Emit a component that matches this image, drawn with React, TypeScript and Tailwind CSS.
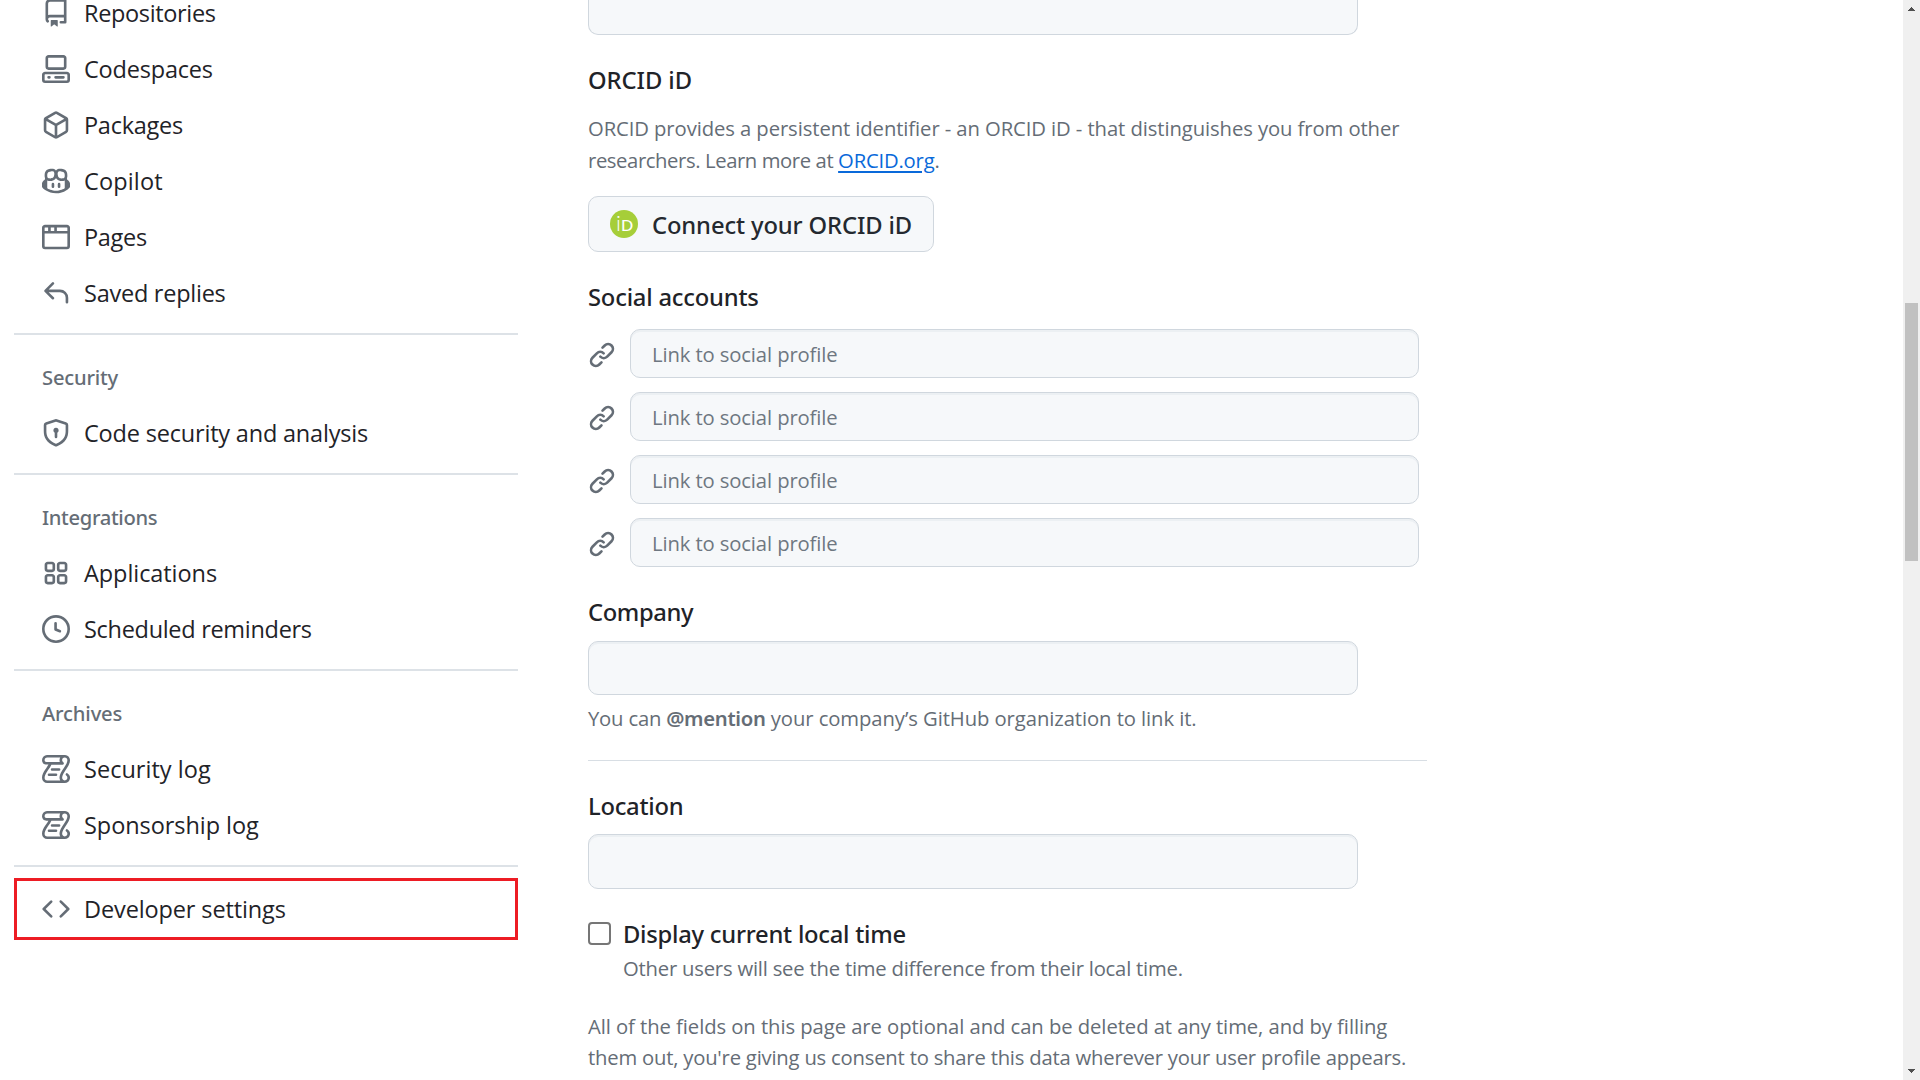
import type { ReactNode } from "react";

const paths = {
  repo: [
    "M2 2.5A2.5 2.5 0 0 1 4.5 0h8.75a.75.75 0 0 1 .75.75v12.5a.75.75 0 0 1-.75.75h-2.5a.75.75 0 0 1 0-1.5h1.75v-2h-8a1 1 0 0 0-.714 1.7.75.75 0 1 1-1.072 1.05A2.495 2.495 0 0 1 2 11.5Zm10.5-1h-8a1 1 0 0 0-1 1v6.708A2.486 2.486 0 0 1 4.5 9h8ZM5 12.25a.25.25 0 0 1 .25-.25h3.5a.25.25 0 0 1 .25.25v3.25a.25.25 0 0 1-.4.2l-1.45-1.087a.249.249 0 0 0-.3 0L5.4 15.7a.25.25 0 0 1-.4-.2Z",
  ],
  codespaces: [
    "M0 11.25c0-.966.784-1.75 1.75-1.75h12.5c.966 0 1.75.784 1.75 1.75v3A1.75 1.75 0 0 1 14.25 16H1.75A1.75 1.75 0 0 1 0 14.25Zm2-9.5C2 .784 2.784 0 3.75 0h8.5C13.216 0 14 .784 14 1.75v5a1.75 1.75 0 0 1-1.75 1.75h-8.5A1.75 1.75 0 0 1 2 6.75Zm1.75-.25a.25.25 0 0 0-.25.25v5c0 .138.112.25.25.25h8.5a.25.25 0 0 0 .25-.25v-5a.25.25 0 0 0-.25-.25Zm-2 9.5a.25.25 0 0 0-.25.25v3c0 .138.112.25.25.25h12.5a.25.25 0 0 0 .25-.25v-3a.25.25 0 0 0-.25-.25Z",
    "M7 12.75a.75.75 0 0 1 .75-.75h4.5a.75.75 0 0 1 0 1.5h-4.5a.75.75 0 0 1-.75-.75Zm-4 0a.75.75 0 0 1 .75-.75h.5a.75.75 0 0 1 0 1.5h-.5a.75.75 0 0 1-.75-.75Z",
  ],
  package: [
    "m8.878.392 5.25 3.045c.54.314.872.89.872 1.514v6.098a1.75 1.75 0 0 1-.872 1.514l-5.25 3.045a1.75 1.75 0 0 1-1.756 0l-5.25-3.045A1.75 1.75 0 0 1 1 11.049V4.951c0-.624.332-1.201.872-1.514L7.122.392a1.75 1.75 0 0 1 1.756 0ZM7.875 1.69l-4.63 2.685L8 7.133l4.755-2.758-4.63-2.685a.248.248 0 0 0-.25 0ZM2.5 5.677v5.372c0 .09.047.171.125.216l4.625 2.683V8.432Zm6.25 8.271 4.625-2.683a.25.25 0 0 0 .125-.216V5.677L8.75 8.432Z",
  ],
  copilot: [
    "M7.998 15.035c-4.562 0-7.873-2.914-7.998-3.749V9.338c.085-.628.677-1.686 1.588-2.065.013-.07.024-.143.036-.218.029-.183.06-.384.126-.612-.201-.508-.254-1.084-.254-1.656 0-.87.128-1.769.693-2.484.579-.733 1.494-1.124 2.724-1.261 1.206-.134 2.262.034 2.944.765.05.053.096.108.139.165.044-.057.094-.112.143-.165.682-.731 1.738-.899 2.944-.765 1.23.137 2.145.528 2.724 1.261.566.715.693 1.614.693 2.484 0 .572-.053 1.148-.254 1.656.066.228.098.429.126.612.012.076.024.148.037.218.924.385 1.522 1.471 1.591 2.095v1.872c0 .766-3.351 3.795-8.002 3.795Zm0-1.485c2.28 0 4.584-1.11 5.002-1.433V7.862l-.023-.116c-.49.21-1.075.291-1.727.291-1.146 0-2.059-.327-2.71-.991A3.222 3.222 0 0 1 8 6.303a3.24 3.24 0 0 1-.544.743c-.65.664-1.563.991-2.71.991-.652 0-1.236-.081-1.727-.291l-.023.116v4.255c.419.323 2.722 1.433 5.002 1.433ZM6.762 2.83c-.193-.206-.637-.413-1.682-.297-1.019.113-1.479.404-1.713.7-.247.312-.369.789-.369 1.554 0 .793.129 1.171.308 1.371.162.181.519.379 1.442.379.853 0 1.339-.235 1.638-.54.315-.322.527-.827.617-1.553.117-.935-.037-1.395-.241-1.614Zm4.155-.297c-1.044-.116-1.488.091-1.681.297-.204.219-.359.679-.242 1.614.091.726.303 1.231.618 1.553.299.305.784.54 1.638.54.922 0 1.28-.198 1.442-.379.179-.2.308-.578.308-1.371 0-.765-.123-1.242-.37-1.554-.233-.296-.693-.587-1.713-.7Z",
    "M6.25 9.037a.75.75 0 0 1 .75.75v1.501a.75.75 0 0 1-1.5 0V9.787a.75.75 0 0 1 .75-.75Zm4.25.75v1.501a.75.75 0 0 1-1.5 0V9.787a.75.75 0 0 1 1.5 0Z",
  ],
  browser: [
    "M0 2.75C0 1.784.784 1 1.75 1h12.5c.966 0 1.75.784 1.75 1.75v10.5A1.75 1.75 0 0 1 14.25 15H1.75A1.75 1.75 0 0 1 0 13.25ZM14.5 6h-13v7.25c0 .138.112.25.25.25h12.5a.25.25 0 0 0 .25-.25Zm-6-3.5v2h6V2.75a.25.25 0 0 0-.25-.25ZM5 2.5v2h2v-2Zm-3.25 0a.25.25 0 0 0-.25.25V4.5h2v-2Z",
  ],
  reply: [
    "M6.78 1.97a.75.75 0 0 1 0 1.06L3.81 6h6.44A4.75 4.75 0 0 1 15 10.75v2.5a.75.75 0 0 1-1.5 0v-2.5a3.25 3.25 0 0 0-3.25-3.25H3.81l2.97 2.97a.749.749 0 0 1-.326 1.275.749.749 0 0 1-.734-.215L1.47 7.28a.75.75 0 0 1 0-1.06l4.25-4.25a.75.75 0 0 1 1.06 0Z",
  ],
  shield: [
    "m8.533.133 5.25 1.68A1.75 1.75 0 0 1 15 3.48V7c0 1.566-.32 3.182-1.303 4.682-.983 1.498-2.585 2.813-5.032 3.855a1.697 1.697 0 0 1-1.33 0c-2.447-1.042-4.049-2.357-5.032-3.855C1.32 10.182 1 8.566 1 7V3.48a1.755 1.755 0 0 1 1.217-1.667l5.25-1.68a1.748 1.748 0 0 1 1.066 0Zm-.61 1.429.001.001-5.25 1.68a.251.251 0 0 0-.174.237V7c0 1.36.275 2.666 1.057 3.859.784 1.194 2.121 2.342 4.366 3.298a.196.196 0 0 0 .154 0c2.245-.957 3.582-2.103 4.366-3.297C13.225 9.666 13.5 8.358 13.5 7V3.48a.25.25 0 0 0-.174-.238l-5.25-1.68a.25.25 0 0 0-.153 0ZM9.5 6.5c0 .536-.286 1.032-.75 1.3v2.45a.75.75 0 0 1-1.5 0V7.8A1.5 1.5 0 1 1 9.5 6.5Z",
  ],
  apps: [
    "M1.5 3.25c0-.966.784-1.75 1.75-1.75h2.5c.966 0 1.75.784 1.75 1.75v2.5A1.75 1.75 0 0 1 5.75 7.5h-2.5A1.75 1.75 0 0 1 1.5 5.75ZM3.25 3a.25.25 0 0 0-.25.25v2.5c0 .138.112.25.25.25h2.5A.25.25 0 0 0 6 5.75v-2.5A.25.25 0 0 0 5.75 3Z",
    "M8.5 3.25c0-.966.784-1.75 1.75-1.75h2.5c.966 0 1.75.784 1.75 1.75v2.5a1.75 1.75 0 0 1-1.75 1.75h-2.5A1.75 1.75 0 0 1 8.5 5.75ZM10.25 3a.25.25 0 0 0-.25.25v2.5c0 .138.112.25.25.25h2.5a.25.25 0 0 0 .25-.25v-2.5a.25.25 0 0 0-.25-.25Z",
    "M1.5 10.25c0-.966.784-1.75 1.75-1.75h2.5c.966 0 1.75.784 1.75 1.75v2.5a1.75 1.75 0 0 1-1.75 1.75h-2.5a1.75 1.75 0 0 1-1.75-1.75ZM3.25 10a.25.25 0 0 0-.25.25v2.5c0 .138.112.25.25.25h2.5a.25.25 0 0 0 .25-.25v-2.5a.25.25 0 0 0-.25-.25Z",
    "M8.5 10.25c0-.966.784-1.75 1.75-1.75h2.5c.966 0 1.75.784 1.75 1.75v2.5a1.75 1.75 0 0 1-1.75 1.75h-2.5a1.75 1.75 0 0 1-1.75-1.75ZM10.25 10a.25.25 0 0 0-.25.25v2.5c0 .138.112.25.25.25h2.5a.25.25 0 0 0 .25-.25v-2.5a.25.25 0 0 0-.25-.25Z",
  ],
  clock: [
    "M8 0a8 8 0 1 1 0 16A8 8 0 0 1 8 0ZM1.5 8a6.5 6.5 0 1 0 13 0 6.5 6.5 0 0 0-13 0Zm7-3.25v2.992l2.028.812a.75.75 0 0 1-.557 1.392l-2.5-1A.751.751 0 0 1 7 8.25v-3.5a.75.75 0 0 1 1.5 0Z",
  ],
  log: [
    "M5 8.25a.75.75 0 0 1 .75-.75h4a.75.75 0 0 1 0 1.5h-4A.75.75 0 0 1 5 8.25ZM4 10.5A.75.75 0 0 0 4 12h4a.75.75 0 0 0 0-1.5H4Z",
    "M13-.005c1.654 0 3 1.328 3 3 0 .982-.338 1.933-.783 2.818-.443.879-1.028 1.758-1.582 2.588l-.011.017c-.568.853-1.104 1.659-1.501 2.446-.398.789-.623 1.494-.623 2.136a1.5 1.5 0 1 0 2.333-1.248.75.75 0 0 1 .834-1.246A3 3 0 0 1 13 16H3a3 3 0 0 1-3-3c0-1.582.891-3.135 1.777-4.506.209-.322.418-.637.623-.946.473-.709.923-1.386 1.287-2.048H2.51c-.576 0-1.381-.133-1.907-.783A2.68 2.68 0 0 1 0 2.995a3 3 0 0 1 3-3Zm0 1.5a1.5 1.5 0 0 0-1.5 1.5c0 .476.223.834.667 1.132A.75.75 0 0 1 11.75 5.5H5.368c-.467 1.003-1.141 2.015-1.773 2.963-.192.289-.381.571-.558.845C2.13 10.711 1.5 11.916 1.5 13A1.5 1.5 0 0 0 3 14.5h7.401A2.989 2.989 0 0 1 10 13c0-.979.338-1.928.784-2.812.441-.874 1.023-1.748 1.575-2.576l.017-.026c.568-.853 1.103-1.658 1.501-2.448.398-.79.623-1.497.623-2.143 0-.838-.669-1.5-1.5-1.5Zm-10 0a1.5 1.5 0 0 0-1.5 1.5c0 .321.1.569.27.778.097.12.325.227.74.227h7.674A2.737 2.737 0 0 1 10 2.995c0-.546.146-1.059.401-1.5Z",
  ],
  code: [
    "m11.28 3.22 4.25 4.25a.75.75 0 0 1 0 1.06l-4.25 4.25a.749.749 0 0 1-1.275-.326.749.749 0 0 1 .215-.734L13.94 8l-3.72-3.72a.749.749 0 0 1 .326-1.275.749.749 0 0 1 .734.215Zm-6.56 0a.751.751 0 0 1 1.042.018.751.751 0 0 1 .018 1.042L2.06 8l3.72 3.72a.749.749 0 0 1-.326 1.275.749.749 0 0 1-.734-.215L.47 8.53a.75.75 0 0 1 0-1.06Z",
  ],
  link: [
    "m7.775 3.275 1.25-1.25a3.5 3.5 0 1 1 4.95 4.95l-2.5 2.5a3.5 3.5 0 0 1-4.95 0 .751.751 0 0 1 .018-1.042.751.751 0 0 1 1.042-.018 1.998 1.998 0 0 0 2.83 0l2.5-2.5a2.002 2.002 0 0 0-2.83-2.83l-1.25 1.25a.751.751 0 0 1-1.042-.018.751.751 0 0 1-.018-1.042Zm-4.69 9.64a1.998 1.998 0 0 0 2.83 0l1.25-1.25a.751.751 0 0 1 1.042.018.751.751 0 0 1 .018 1.042l-1.25 1.25a3.5 3.5 0 1 1-4.95-4.95l2.5-2.5a3.5 3.5 0 0 1 4.95 0 .751.751 0 0 1-.018 1.042.751.751 0 0 1-1.042.018 1.998 1.998 0 0 0-2.83 0l-2.5 2.5a1.998 1.998 0 0 0 0 2.83Z",
  ],
};

type IconName = keyof typeof paths;

function Icon({ name }: { name: IconName }) {
  return (
    <svg viewBox="0 0 16 16" className="size-7 shrink-0 fill-[#656d76]" aria-hidden="true">
      {paths[name].map((d) => (
        <path key={d} d={d} />
      ))}
    </svg>
  );
}

function NavItem({ icon, label, tracking }: { icon: IconName; label: string; tracking: string }) {
  return (
    <a className="flex h-14 items-center gap-3.5 pl-7 text-[23.5px] leading-6 whitespace-nowrap">
      <Icon name={icon} />
      <span className={tracking}>{label}</span>
    </a>
  );
}

function NavGroup({ title, tracking, children }: { title?: string; tracking?: string; children: ReactNode }) {
  return (
    <section className="border-b-2 border-[#dde2e7] pb-3">
      {title && (
        <h3 className="h-[70px] pt-3.5 pl-7 font-['Noto_Sans',sans-serif] text-[20.2px] leading-14 font-medium text-[#656d76]">
          <span className={tracking}>{title}</span>
        </h3>
      )}
      {children}
    </section>
  );
}

function Sidebar() {
  return (
    <nav className="-mt-[15px] ml-3.5 w-[504px] shrink-0">
      <NavGroup>
        <NavItem icon="repo" label="Repositories" tracking="tracking-[-0.35px]" />
        <NavItem icon="codespaces" label="Codespaces" tracking="tracking-[-0.2px]" />
        <NavItem icon="package" label="Packages" tracking="tracking-[-0.27px]" />
        <NavItem icon="copilot" label="Copilot" tracking="tracking-[0.15px]" />
        <NavItem icon="browser" label="Pages" tracking="tracking-[-0.3px]" />
        <NavItem icon="reply" label="Saved replies" tracking="tracking-[-0.25px]" />
      </NavGroup>
      <NavGroup title="Security" tracking="tracking-[-0.2px]">
        <NavItem icon="shield" label="Code security and analysis" tracking="tracking-[-0.19px]" />
      </NavGroup>
      <NavGroup title="Integrations" tracking="tracking-[-0.34px]">
        <NavItem icon="apps" label="Applications" tracking="tracking-[-0.07px]" />
        <NavItem icon="clock" label="Scheduled reminders" tracking="tracking-[-0.3px]" />
      </NavGroup>
      <NavGroup title="Archives" tracking="tracking-[-0.15px]">
        <NavItem icon="log" label="Security log" tracking="tracking-[0.03px]" />
        <NavItem icon="log" label="Sponsorship log" tracking="tracking-[-0.06px]" />
      </NavGroup>
      <div className="mt-[11px] border-[3px] border-[#ed1c24]">
        <div className="-ml-[3px]">
          <NavItem icon="code" label="Developer settings" tracking="tracking-[-0.12px]" />
        </div>
      </div>
    </nav>
  );
}

function Heading({ children, className }: { children: ReactNode; className: string }) {
  return (
    <h2 className={`font-['Noto_Sans',sans-serif] text-[23.75px] leading-9 font-medium whitespace-nowrap ${className}`}>
      {children}
    </h2>
  );
}

const field =
  "block rounded-[10px] border border-[#d0d7de] bg-[#f6f8fa] shadow-[inset_0_2px_0_rgba(208,215,222,0.25)] outline-none";

function OrcidLogo() {
  return (
    <svg viewBox="0 0 28 28" className="size-7 shrink-0">
      <circle cx="14" cy="14" r="14" fill="#a6ce39" />
      <text x="6" y="21" fill="#fff" fontFamily="Lato, sans-serif" fontWeight="300" fontSize="22">
        i
      </text>
      <text x="11" y="21" fill="#fff" fontFamily="Lato, sans-serif" fontSize="16">
        D
      </text>
    </svg>
  );
}

function ProfileForm() {
  return (
    <main className="ml-[70px] w-[839px] shrink-0 text-[20.25px] text-[#656d76]">
      <div className="h-[35px] w-[770px] rounded-b-[10px] border border-t-0 border-[#d0d7de] bg-[#f6f8fa]" />

      <Heading className="mt-[27px] tracking-[-0.05px] text-[#1f2328]">ORCID iD</Heading>
      <p className="mt-3.5 leading-8 whitespace-nowrap">
        <span className="tracking-[-0.09px]">
          ORCID provides a persistent identifier - an ORCID iD - that distinguishes you from other
        </span>
        <br />
        <span className="tracking-[-0.4px]">researchers. Learn more at </span>
        <span className="tracking-[-0.2px]">
          <a className="text-[#0969da] underline decoration-2 underline-offset-[3px]">ORCID.org</a>.
        </span>
      </p>

      <button className="mt-5 flex h-14 w-[346px] items-center gap-3.5 rounded-[10px] border border-[#d0d7de] bg-[#f6f8fa] pl-[21px] font-['Noto_Sans',sans-serif] text-[23.75px] font-medium tracking-[-0.12px] whitespace-nowrap text-[#24292f]">
        <OrcidLogo />
        <span className="pt-[3px]">Connect your ORCID iD</span>
      </button>

      <Heading className="mt-[27px] tracking-[-0.2px] text-[#1f2328]">Social accounts</Heading>
      <div className="mt-3.5 flex flex-col gap-3.5">
        {[1, 2, 3, 4].map((n) => (
          <div key={n} className="flex items-center gap-3.5">
            <div className="pt-[3px]">
              <Icon name="link" />
            </div>
            <input
              placeholder="Link to social profile"
              className={`${field} h-[49px] w-[789px] px-[21px] tracking-[-0.12px] placeholder:text-[#6e7781]`}
            />
          </div>
        ))}
      </div>

      <Heading className="mt-[27px] tracking-[-0.4px] text-[#1f2328]">Company</Heading>
      <input className={`${field} mt-[11px] h-[54px] w-[770px]`} />
      <p className="mt-[7px] leading-8 tracking-[-0.08px] whitespace-nowrap">
        <span className="tracking-[-0.2px]">You can </span>
        <strong className="font-['Noto_Sans',sans-serif] font-semibold tracking-[-0.3px]">@mention</strong> your
        company’s GitHub organization to link it.
      </p>

      <hr className="mt-[26px] border-[#d8dee4]" />

      <Heading className="mt-[27px] tracking-[-0.25px] text-[#1f2328]">Location</Heading>
      <input className={`${field} mt-2.5 h-[55px] w-[770px]`} />

      <div className="mt-[27px] flex gap-3">
        <input
          type="checkbox"
          className="mt-1.5 size-[23px] shrink-0 appearance-none rounded-[4px] border-2 border-[#767676] bg-white"
        />
        <div>
          <Heading className="tracking-[-0.24px] text-[#1f2328]">Display current local time</Heading>
          <p className="mt-1 leading-6 tracking-[-0.21px] whitespace-nowrap">
            Other users will see the time difference from their local time.
          </p>
        </div>
      </div>

      <p className="mt-[31px] leading-[31px] whitespace-nowrap">
        <span className="tracking-[-0.07px]">
          All of the fields on this page are optional and can be deleted at any time, and by filling
        </span>
        <br />
        <span className="tracking-[-0.21px]">
          them out, you're giving us consent to share this data wherever your user profile appears.
        </span>
      </p>
    </main>
  );
}

function Scrollbar() {
  return (
    <div className="ml-auto flex h-full w-[17px] flex-col items-center bg-[#f0f0f0]">
      <svg viewBox="0 0 7 4" className="mt-[7px] h-1 w-[7px] shrink-0 fill-[#505050]" shapeRendering="crispEdges">
        <path d="M3 0h1v1h1v1h1v1h1v1H0V3h1V2h1V1h1z" />
      </svg>
      <div className="mt-[292px] h-[258px] w-[13px] bg-[#c1c1c1]" />
      <svg viewBox="0 0 7 4" className="mt-auto mb-[7px] h-1 w-[7px] shrink-0 fill-[#505050]" shapeRendering="crispEdges">
        <path d="M0 0h7v1H6v1H5v1H4v1H3V3H2V2H1V1H0z" />
      </svg>
    </div>
  );
}

export default function App() {
  return (
    <div className="flex h-screen w-full items-start overflow-hidden bg-white font-['Open_Sans',sans-serif] text-[#1f2328]">
      <Sidebar />
      <ProfileForm />
      <Scrollbar />
    </div>
  );
}
